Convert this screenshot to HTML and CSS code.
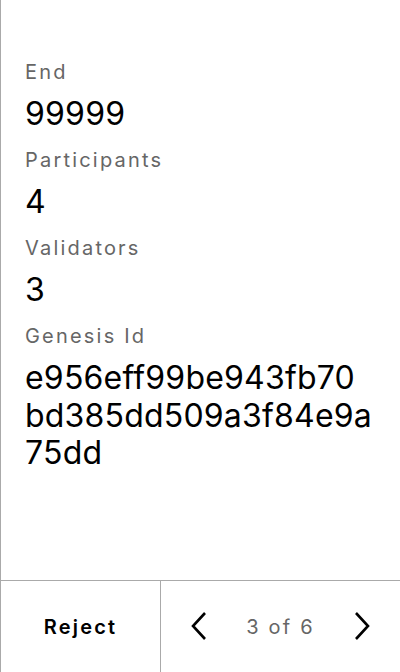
FILE: index.html
```html
<!DOCTYPE html>
<html>
<head>
<meta charset="utf-8">
<link rel="stylesheet" href="styles.css">
</head>
<body>
<div class="page">
  <div class="details">
    <div class="label">End</div>
    <div class="value">99999</div>
    <div class="label">Participants</div>
    <div class="value">4</div>
    <div class="label">Validators</div>
    <div class="value">3</div>
    <div class="label">Genesis Id</div>
    <div class="value hash"><span class="seg">e956eff99be943fb70</span><span class="seg">bd385dd509a3f84e9a</span><span class="seg">75dd</span></div>
  </div>
  <div class="footer">
    <div class="reject">Reject</div>
    <div class="pager">
      <svg class="chev" width="24" height="32" viewBox="0 0 24 32"><path d="M17 2 L5 15 L17 28" fill="none" stroke="#000" stroke-width="2.6" stroke-linecap="butt" stroke-linejoin="miter"/></svg>
      <span class="count">3 of 6</span>
      <svg class="chev" width="24" height="32" viewBox="0 0 24 32"><path d="M7 2 L19 15 L7 28" fill="none" stroke="#000" stroke-width="2.6" stroke-linecap="butt" stroke-linejoin="miter"/></svg>
    </div>
  </div>
</div>
</body>
</html>
```
FILE: styles.css
```css
html, body {
  margin: 0;
  padding: 0;
  background: #fff;
}
body {
  font-family: Inter, "Noto Sans", sans-serif;
  color: #000;
}
.page {
  height: 672px;
  box-sizing: border-box;
  border-left: 1px solid #aaa;
  display: flex;
  flex-direction: column;
}
.details {
  flex: 1;
  padding: 60px 24px 0 24px;
}
.label {
  font-size: 20px;
  line-height: 24px;
  letter-spacing: 2.2px;
  color: #666;
  margin-bottom: 11px;
}
.value {
  font-size: 32px;
  line-height: 38px;
  letter-spacing: 0.2px;
  color: #000;
  margin-bottom: 15px;
}
.hash {
  line-height: 37.5px;
}
.seg {
  display: block;
  white-space: nowrap;
}
.footer {
  height: 91px;
  border-top: 1px solid #aaa;
  display: flex;
}
.reject {
  width: 159px;
  border-right: 1px solid #aaa;
  display: flex;
  align-items: center;
  justify-content: center;
  font-size: 20px;
  font-weight: 600;
  letter-spacing: 2.2px;
}
.pager {
  flex: 1;
  display: flex;
  align-items: center;
  justify-content: center;
  gap: 34px;
}
.count {
  font-size: 20px;
  letter-spacing: 2.2px;
  color: #666;
}
.chev {
  display: block;
}
```
